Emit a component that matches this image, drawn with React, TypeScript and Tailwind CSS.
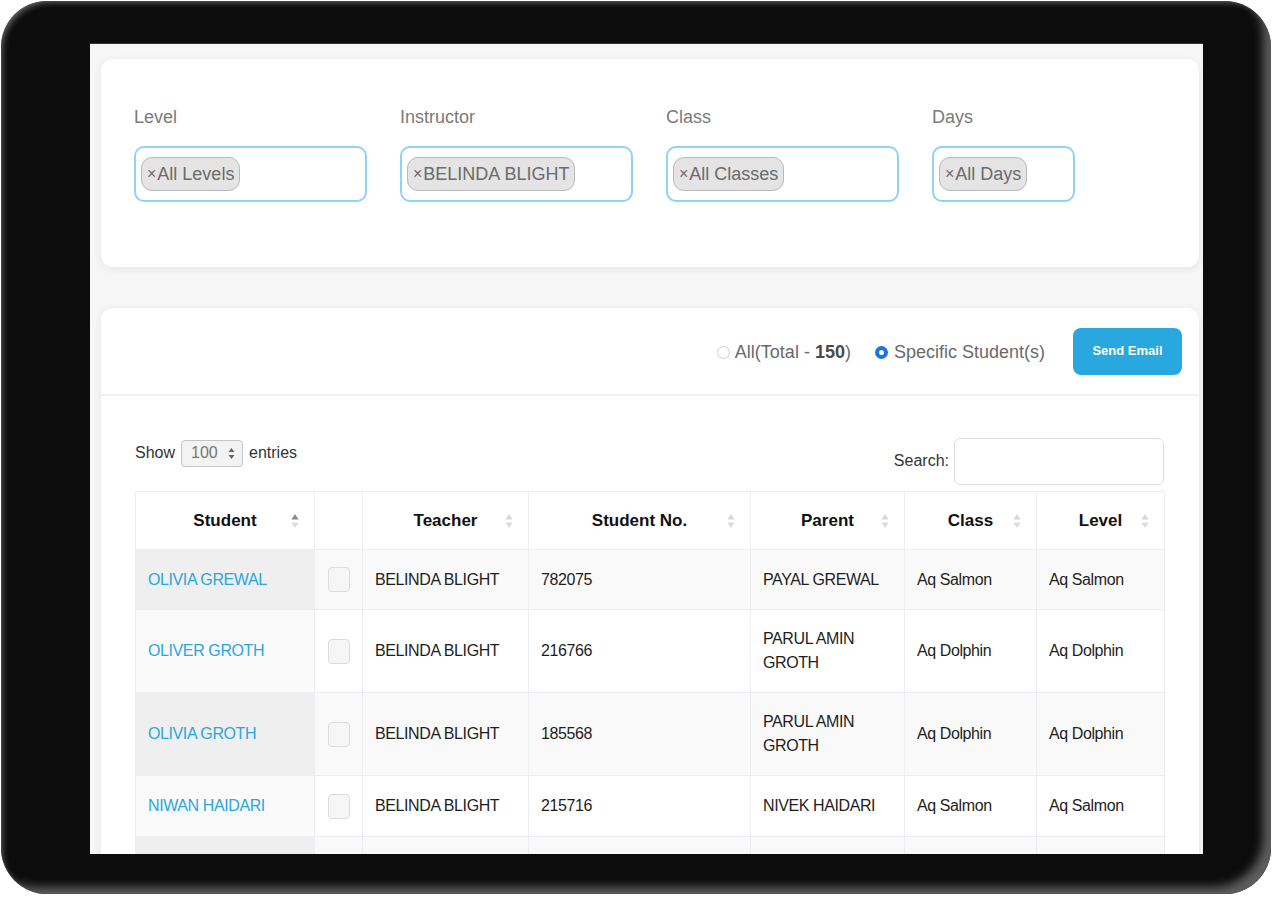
import React from 'react';

type Row = { s: string; t: string; n: string; p: string; c: string; l: string };

const rows: Row[] = [
  { s: 'OLIVIA GREWAL', t: 'BELINDA BLIGHT', n: '782075', p: 'PAYAL GREWAL', c: 'Aq Salmon', l: 'Aq Salmon' },
  { s: 'OLIVER GROTH', t: 'BELINDA BLIGHT', n: '216766', p: 'PARUL AMIN GROTH', c: 'Aq Dolphin', l: 'Aq Dolphin' },
  { s: 'OLIVIA GROTH', t: 'BELINDA BLIGHT', n: '185568', p: 'PARUL AMIN GROTH', c: 'Aq Dolphin', l: 'Aq Dolphin' },
  { s: 'NIWAN HAIDARI', t: 'BELINDA BLIGHT', n: '215716', p: 'NIVEK HAIDARI', c: 'Aq Salmon', l: 'Aq Salmon' },
];

function SortIcon({ active }: { active?: boolean }) {
  return (
    <svg width="8" height="16" viewBox="0 0 8 16" className="absolute right-[15px] top-1/2 -translate-y-1/2">
      <path d="M4 1 L7.5 6.5 L0.5 6.5 Z" fill={active ? '#8a8a8a' : '#d6d6d6'} />
      <path d="M4 15 L7.5 9.5 L0.5 9.5 Z" fill="#dcdcdc" />
    </svg>
  );
}

function Filter({ label, tag, w }: { label: string; tag: string; w: string }) {
  return (
    <div className={`flex flex-col ${w}`}>
      <div className="text-[18px] leading-[21px] text-[#7a7a7a] h-[21px]">{label}</div>
      <div className="mt-[18px] h-[56px] rounded-[10px] border-2 border-[#8fd2f3] bg-white flex items-center pl-[5px]">
        <div className="h-[34px] rounded-[11px] border border-[#b9b9b9] bg-[#e4e4e4] flex items-center pl-[5px] pr-[5px] text-[18px] text-[#6b6b6b]">
          <span className="text-[16px] mr-[1px]">×</span>
          <span>{tag}</span>
        </div>
      </div>
    </div>
  );
}

export default function App() {
  const th = 'relative border border-[#eceef2] py-[16px] text-[17px] leading-[25px] font-bold text-[#111] text-center bg-white';
  const base = 'border border-[#eceef2] px-[12px] py-[17px] text-[16px] leading-[24px] tracking-[-0.4px] align-middle';
  return (
    <div className="w-[1274px] h-[898px] bg-white overflow-hidden font-['Liberation_Sans',Arial,sans-serif]">
      <div className="ml-[1px] mt-[1px] w-[1270px] h-[893px] rounded-[46px] bg-[#0c0c0c] shadow-[inset_-12px_-11px_10px_-4px_#5e5e5e,inset_4px_4px_6px_-3px_#6a6a6a] pl-[89px] pt-[42px]">
        <div className="w-[1113px] h-[811px] bg-[#f6f6f7] overflow-hidden border-t border-[#2b3550] pt-[15px] pl-[11px]">
          {/* Filters card */}
          <div className="w-[1098px] h-[208px] bg-white rounded-[12px] shadow-[0_2px_8px_rgba(0,0,0,0.07)] pt-[48px] pl-[33px] flex gap-[33px]">
            <Filter label="Level" tag="All Levels" w="w-[233px]" />
            <Filter label="Instructor" tag="BELINDA BLIGHT" w="w-[233px]" />
            <Filter label="Class" tag="All Classes" w="w-[233px]" />
            <Filter label="Days" tag="All Days" w="w-[143px]" />
          </div>

          {/* Table card */}
          <div className="mt-[41px] w-[1098px] bg-white rounded-[12px] shadow-[0_2px_8px_rgba(0,0,0,0.07)]">
            <div className="h-[88px] flex items-center justify-end pr-[17px] border-b-2 border-[#f1f1f3]">
              <div className="flex items-center text-[18px] text-[#6a6a6a] mt-[2px]">
                <span className="w-[13px] h-[13px] rounded-full border border-[#cfcfcf] bg-white mr-[5px]" />
                <span>
                  All(Total - <span className="font-bold text-[#4a4a4a]">150</span>)
                </span>
              </div>
              <div className="flex items-center text-[18px] text-[#6a6a6a] ml-[24px] mt-[2px]">
                <span className="w-[13px] h-[13px] rounded-full bg-[#1a73e8] flex items-center justify-center mr-[6px]">
                  <span className="w-[5px] h-[5px] rounded-full bg-white" />
                </span>
                <span>Specific Student(s)</span>
              </div>
              <button className="ml-[28px] w-[109px] h-[47px] rounded-[8px] bg-[#29a8e0] text-white text-[13px] font-bold">
                Send Email
              </button>
            </div>

            <div className="pt-[42px] pl-[34px] pr-[35px]">
              <div className="flex justify-between items-start">
                <div className="flex items-center h-[30px] text-[16px] text-[#333]">
                  <span>Show</span>
                  <div className="ml-[6px] mr-[6px] w-[62px] h-[27px] rounded-[4px] border border-[#c4c4c4] bg-[#f3f3f3] flex items-center justify-between pl-[9px] pr-[7px] text-[#777]">
                    <span>100</span>
                    <svg width="7" height="13" viewBox="0 0 7 13">
                      <path d="M3.5 1 L6.5 5 L0.5 5 Z" fill="#666" />
                      <path d="M3.5 12 L6.5 8 L0.5 8 Z" fill="#666" />
                    </svg>
                  </div>
                  <span>entries</span>
                </div>
                <div className="flex items-center text-[16px] text-[#333]">
                  <span className="mt-[-1px]">Search:</span>
                  <div className="ml-[5px] w-[210px] h-[47px] rounded-[6px] border border-[#dedede] bg-white" />
                </div>
              </div>

              <table className="mt-[6px] w-[1029px] table-fixed border-collapse">
                <colgroup>
                  <col className="w-[179px]" />
                  <col className="w-[48px]" />
                  <col className="w-[166px]" />
                  <col className="w-[222px]" />
                  <col className="w-[154px]" />
                  <col className="w-[132px]" />
                  <col className="w-[128px]" />
                </colgroup>
                <thead>
                  <tr>
                    <th className={th}>Student<SortIcon active /></th>
                    <th className={th}></th>
                    <th className={th}>Teacher<SortIcon /></th>
                    <th className={th}>Student No.<SortIcon /></th>
                    <th className={th}>Parent<SortIcon /></th>
                    <th className={th}>Class<SortIcon /></th>
                    <th className={th}>Level<SortIcon /></th>
                  </tr>
                </thead>
                <tbody>
                  {rows.map((r, i) => {
                    const odd = i % 2 === 0;
                    const cell = `${base} text-[#1e1e1e] ${odd ? 'bg-[#f9f9f9]' : 'bg-white'}`;
                    return (
                      <tr key={i}>
                        <td className={`${base} text-[#2aa6df] ${odd ? 'bg-[#efefef]' : 'bg-[#fafafa]'}`}>{r.s}</td>
                        <td className={`${cell} text-center`}>
                          <span className="inline-block align-middle w-[22px] h-[25px] rounded-[4px] border border-[#dcdcdc] bg-[#f6f6f6]" />
                        </td>
                        <td className={cell}>{r.t}</td>
                        <td className={cell}>{r.n}</td>
                        <td className={cell}>{r.p}</td>
                        <td className={cell}>{r.c}</td>
                        <td className={cell}>{r.l}</td>
                      </tr>
                    );
                  })}
                  <tr>
                    <td className={`${base} h-[59px] bg-[#efefef]`}></td>
                    <td className={`${base} bg-[#f9f9f9]`}></td>
                    <td className={`${base} bg-[#f9f9f9]`}></td>
                    <td className={`${base} bg-[#f9f9f9]`}></td>
                    <td className={`${base} bg-[#f9f9f9]`}></td>
                    <td className={`${base} bg-[#f9f9f9]`}></td>
                    <td className={`${base} bg-[#f9f9f9]`}></td>
                  </tr>
                </tbody>
              </table>
            </div>
          </div>
        </div>
      </div>
    </div>
  );
}
